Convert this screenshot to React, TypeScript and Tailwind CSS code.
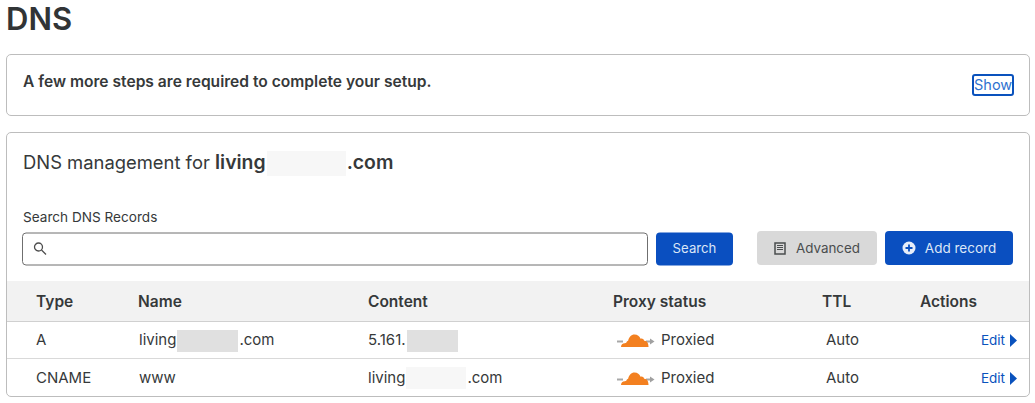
import React from "react";

function Cloud() {
  return (
    <svg width="38" height="15" viewBox="0 0 38 15" className="shrink-0">
      <path d="M0 8.500h6" stroke="#a8a8a8" strokeWidth="2" />
      <path d="M29 8.500h5" stroke="#a8a8a8" strokeWidth="2" />
      <path d="M33 5.500l4.500 3-4.500 3z" fill="#a0a0a0" />
      <path d="M4 14c0-2.400 1.500-3.800 3.800-3.800.5 0 .8-.1 1.300-.1.300-1.300 1.300-2 2-2.300C12 4 14.200 1.500 17.500 1.500c3 0 5.200 1.800 6 4.300 1.500-.6 3.300.4 3.600 2 .2 0 .4 0 .6 0 2.300 0 3.900 2.800 3.800 6.200z" fill="#f38020" />
    </svg>
  );
}

function Row({ type, name, content, last }: { type: string; name: React.ReactNode; content: React.ReactNode; last?: boolean }) {
  return (
    <div className={"grid h-[37px] grid-cols-[102px_230px_245px_209px_98px_1fr] items-center pl-[29px] pr-[12px] pt-px text-[15px] text-[#36393a] " + (last ? "" : "border-b border-[#d9d9d9]")}>
      <div>{type}</div>
      <div className="flex items-center pl-px">{name}</div>
      <div className="flex items-center">{content}</div>
      <div className="flex items-center pl-[4px]">
        <Cloud />
        <span className="ml-[6px]">Proxied</span>
      </div>
      <div className="pl-[4px]">Auto</div>
      <div className="flex items-center justify-end gap-[5px] text-[13.5px] text-[#0a52bd]">
        Edit
        <svg width="7" height="13" viewBox="0 0 7 13"><path d="M0 0l7 6.500-7 6.500z" fill="#0a52bd" /></svg>
      </div>
    </div>
  );
}

export default function App() {
  return (
    <div className="h-[403px] w-[1035px] overflow-hidden bg-white px-[6px] font-['Inter',sans-serif] text-[#36393a]">
      <h1 className="h-[54px] pt-[1px] text-[31px] font-semibold leading-[35px] text-[#313436]">DNS</h1>

      <div className="flex h-[62px] w-[1024px] items-center justify-between rounded-[5px] border border-[#bdbdbd] pl-[16px] pr-[15px]">
        <p className="pb-[6px] text-[15.6px] font-semibold">A few more steps are required to complete your setup.</p>
        <button className="mb-[1px] h-[22px] w-[42px] rounded-[3px] border-2 border-[#0a52bd] text-center text-[14.5px] leading-[18px] text-[#2f72d0]">Show</button>
      </div>

      <div className="mt-[16px] h-[265px] w-[1024px] rounded-[5px] border border-[#bdbdbd]">
        <h2 className="flex h-[60px] items-center pl-[16px] text-[18.4px]">
          DNS management for&nbsp;<span className="text-[19.4px] font-semibold">living</span>
          <span className="mx-[1px] h-[25px] w-[79px] bg-[#f7f7f7]" />
          <span className="text-[19.4px] font-semibold">.com</span>
        </h2>

        <div className="flex h-[88px] flex-col pl-[15px] pr-[16px]">
          <label className="pl-px pt-[15px] text-[13.6px] leading-[18px] text-[#36393a]">Search DNS Records</label>
          <div className="mt-[5px] flex items-center">
            <div className="flex h-[33px] w-[626px] translate-y-[0.5px] items-center rounded-[4px] border border-[#6f6f6f] pl-[10px]">
              <svg width="14" height="14" viewBox="0 0 14 14" fill="none" stroke="#4d4d4d" strokeWidth="1.300"><circle cx="5.500" cy="5.500" r="4" /><path d="M8.500 8.500L13 13" /></svg>
            </div>
            <button className="ml-[8px] h-[33px] w-[77px] translate-y-[0.5px] rounded-[4px] bg-[#0a4fc0] text-[13.2px] text-[#dbe6f7]">Search</button>
            <button className="ml-[24px] flex h-[34px] w-[120px] items-center justify-center gap-[10px] rounded-[4px] bg-[#d9d9d9] text-[13.4px] text-[#4a4d4e]">
              <svg width="12" height="13" viewBox="0 0 12 13" fill="none" stroke="#4a4d4e"><rect x="1" y="1" width="10" height="11" strokeWidth="1.500" /><path d="M3 3.500h6M3 5.500h6M3 7.500h6" strokeWidth="1" /></svg>
              Advanced
            </button>
            <button className="ml-[8px] flex h-[34px] w-[128px] items-center justify-center gap-[9px] rounded-[4px] bg-[#0a4fc0] text-[13.5px] text-[#dbe6f7]">
              <svg width="14" height="14" viewBox="0 0 14 14"><circle cx="7" cy="7" r="6.500" fill="#e6edf9" /><path d="M7 3.500v7M3.500 7h7" stroke="#0a4fc0" strokeWidth="1.800" /></svg>
              Add record
            </button>
          </div>
        </div>

        <div className="grid h-[41px] grid-cols-[102px_230px_245px_209px_98px_1fr] items-center border-b border-[#d0d0d0] bg-[#f2f2f2] pl-[29px] pr-[12px] pt-px text-[15.5px] font-semibold text-[#36393a]">
          <div>Type</div>
          <div>Name</div>
          <div>Content</div>
          <div>Proxy status</div>
          <div>TTL</div>
          <div>Actions</div>
        </div>
        <Row
          type="A"
          name={<>living<span className="mx-[1px] h-[22px] w-[61px] bg-[#e0e0e0]" />.com</>}
          content={<>5.161.<span className="ml-px h-[22px] w-[51px] bg-[#e0e0e0]" /></>}
        />
        <Row
          last
          type="CNAME"
          name="www"
          content={<>living<span className="mx-[1px] h-[22px] w-[60px] bg-[#f7f7f7]" />.com</>}
        />
      </div>
    </div>
  );
}
